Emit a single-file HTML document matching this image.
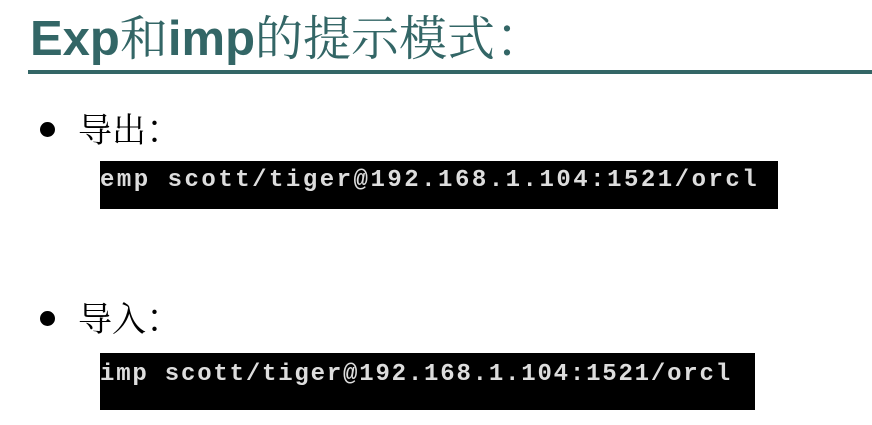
<!DOCTYPE html>
<html><head><meta charset="utf-8"><style>
body{margin:0;width:872px;height:425px;background:#fff;position:relative;overflow:hidden;font-family:"Liberation Serif","Noto Serif CJK SC",serif}
.t{position:absolute;left:30px;top:2px;font-size:48px;color:#336666;white-space:nowrap;line-height:64px}
.t b{font-family:"Liberation Sans",sans-serif;font-weight:900;font-size:49px}
.c{font-family:"Noto Sans CJK SC",sans-serif;font-weight:300}
.line{position:absolute;left:28px;top:70px;width:844px;height:4px;background:#336666}
.dot{position:absolute;width:15px;height:15px;border-radius:50%;background:#000}
.h{position:absolute;left:78px;font-size:34px;line-height:40px;color:#000}
.box{position:absolute;background:#000;color:#ddd;font-family:"Liberation Mono",monospace;font-weight:bold;font-size:24px;white-space:nowrap;line-height:26px;overflow:hidden}
</style></head><body>
<div class="t"><b>Exp</b>和<b>imp</b>的提示模式<span class="c">：</span></div>
<div class="line"></div>
<div class="dot" style="left:40px;top:122px"></div>
<div class="h" style="top:108px">导出<span class="c">：</span></div>
<div class="box" style="left:100px;top:161px;width:678px;height:48px;padding-top:7px;box-sizing:border-box;letter-spacing:2.5px">emp scott/tiger@192.168.1.104:1521/orcl</div>
<div class="dot" style="left:40px;top:311px"></div>
<div class="h" style="top:297px">导入<span class="c">：</span></div>
<div class="box" style="left:100px;top:353px;width:655px;height:57px;padding-top:9px;box-sizing:border-box;letter-spacing:1.8px">imp scott/tiger@192.168.1.104:1521/orcl</div>
</body></html>
